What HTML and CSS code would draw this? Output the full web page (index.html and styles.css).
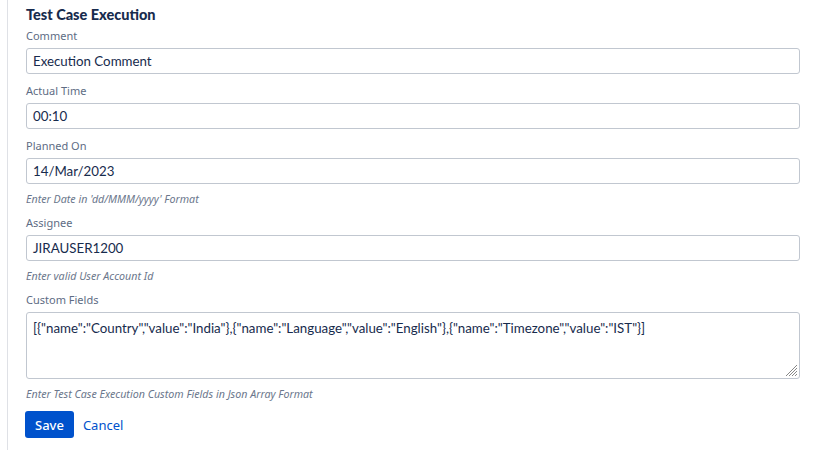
FILE: index.html
```html
<!DOCTYPE html>
<html>
<head>
<meta charset="utf-8">
<link rel="stylesheet" href="styles.css">
</head>
<body>
<div class="panel">
  <h2 class="title">Test Case Execution</h2>
  <div class="field">
    <label class="label">Comment</label>
    <div class="input">Execution Comment</div>
  </div>
  <div class="field">
    <label class="label">Actual Time</label>
    <div class="input">00:10</div>
  </div>
  <div class="field">
    <label class="label">Planned On</label>
    <div class="input">14/Mar/2023</div>
    <div class="help">Enter Date in 'dd/MMM/yyyy' Format</div>
  </div>
  <div class="field">
    <label class="label">Assignee</label>
    <div class="input">JIRAUSER1200</div>
    <div class="help">Enter valid User Account Id</div>
  </div>
  <div class="field">
    <label class="label">Custom Fields</label>
    <div class="textarea">[{"name":"Country","value":"India"},{"name":"Language","value":"English"},{"name":"Timezone","value":"IST"}]<svg class="grip" width="14" height="14" viewBox="0 0 14 14"><path d="M13 2 L2 13 M13 5 L5 13 M13 8 L8 13 M13 11 L11 13" stroke="#888" stroke-width="1" fill="none"/></svg></div>
    <div class="help">Enter Test Case Execution Custom Fields in Json Array Format</div>
  </div>
  <div class="actions">
    <button class="btn-primary">Save</button>
    <a class="btn-link">Cancel</a>
  </div>
</div>
</body>
</html>
```
FILE: styles.css
```css
html, body {
  margin: 0;
  padding: 0;
  background: #fff;
  font-family: "Noto Sans", "Open Sans", sans-serif;
  color: #172B4D;
}
.panel {
  margin-left: 7px;
  border-left: 1px solid #DFE1E6;
  padding: 8px 23px 20px 18px;
  min-height: 450px;
  box-sizing: border-box;
}
.title {
  margin: 0;
  font-family: "Lato", "Noto Sans", sans-serif;
  font-size: 14.5px;
  font-weight: 900;
  line-height: 14px;
  color: #172B4D;
}
.field {
  display: flex;
  flex-direction: column;
}
.label {
  font-size: 11px;
  line-height: 14px;
  color: #5E6C84;
  margin-top: 10px;
  margin-bottom: 5px;
}
.field:first-of-type .label {
  margin-top: 7px;
}
.input {
  height: 26px;
  box-sizing: border-box;
  border: 1px solid #C1C7D0;
  border-radius: 3px;
  padding: 0 6px;
  font-family: "Lato", "Noto Sans", sans-serif;
  font-size: 13.3px;
  line-height: 24px;
  color: #172B4D;
}
.textarea {
  position: relative;
  height: 67px;
  box-sizing: border-box;
  border: 1px solid #C1C7D0;
  border-radius: 3px;
  padding: 6px 6px;
  font-family: "Lato", "Noto Sans", sans-serif;
  font-size: 13.3px;
  line-height: 18px;
  color: #172B4D;
}
.grip {
  position: absolute;
  right: 1px;
  bottom: 1px;
}
.help {
  font-size: 10.7px;
  font-style: italic;
  line-height: 14px;
  color: #6B778C;
  margin-top: 8px;
  margin-bottom: 0;
}
.actions {
  display: flex;
  align-items: center;
  gap: 9px;
  margin-top: 10px;
}
.btn-primary {
  background: #0052CC;
  color: #fff;
  border: none;
  border-radius: 3px;
  height: 27px;
  padding: 0 10px;
  font-family: inherit;
  font-size: 13px;
  font-weight: 500;
  margin-left: -1px;
}
.btn-link {
  color: #0052CC;
  font-size: 13px;
}
```
